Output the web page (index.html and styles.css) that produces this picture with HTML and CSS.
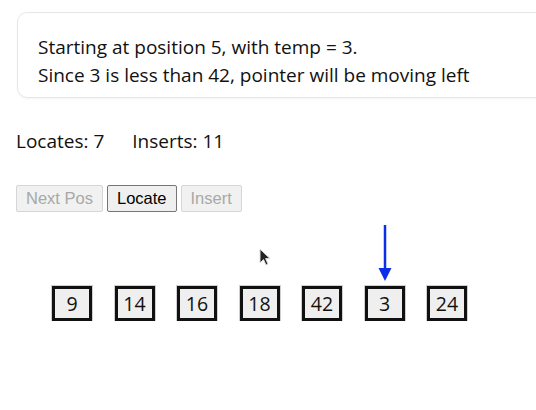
FILE: index.html
```
<!DOCTYPE html>
<html>
<head>
<meta charset="utf-8">
<link rel="stylesheet" href="styles.css">
</head>
<body>
<div class="page">
  <div class="card">
    <div>Starting at position 5, with temp = 3.</div>
    <div>Since 3 is less than 42, pointer will be moving left</div>
  </div>
  <div class="stats">
    <span>Locates: 7</span>
    <span>Inserts: 11</span>
  </div>
  <div class="buttons">
    <button class="btn" disabled>Next Pos</button>
    <button class="btn">Locate</button>
    <button class="btn" disabled>Insert</button>
  </div>
  <div class="viz">
    <div class="cell"><div class="slot"></div><div class="box">9</div></div>
    <div class="cell"><div class="slot"></div><div class="box">14</div></div>
    <div class="cell"><div class="slot"></div><div class="box">16</div></div>
    <div class="cell"><div class="slot"></div><div class="box">18</div></div>
    <div class="cell"><div class="slot"></div><div class="box">42</div></div>
    <div class="cell"><div class="slot">
      <svg class="arrow" width="14" height="57" viewBox="0 0 14 57"><line x1="7" y1="0" x2="7" y2="45" stroke="#0a2fe6" stroke-width="2.5"/><polygon points="0.5,43 13.5,43 7,56" fill="#0a2fe6"/></svg>
    </div><div class="box">3</div></div>
    <div class="cell"><div class="slot"></div><div class="box">24</div></div>
    <svg class="cursor" width="14" height="20" viewBox="0 0 14 20"><path d="M1 1 L1 15 L4.5 11.5 L7 17 L9 16 L6.6 10.6 L11 10.6 Z" fill="#222" stroke="#ddd" stroke-width="1"/></svg>
  </div>
</div>
</body>
</html>
```
FILE: styles.css
```
html, body { margin: 0; padding: 0; background: #fff; }
body { font-family: "Open Sans", "DejaVu Sans", sans-serif; color: #111; }
.page { padding: 12px 0 0 16px; overflow: hidden; width: 520px; }
.card {
  margin-left: 1px;
  width: 560px;
  border: 1px solid #e6e6e6;
  border-radius: 10px;
  padding: 20px 20px 8px 20px;
  font-size: 19px;
  line-height: 28px;
  box-shadow: 0 1px 2px rgba(0,0,0,0.04);
}
.stats { margin-top: 30px; font-size: 19px; display: flex; gap: 28px; line-height: 26px; }
.buttons { margin-top: 31px; display: flex; gap: 4px; }
.btn {
  font-family: "Liberation Sans", Arial, sans-serif;
  font-size: 16.5px;
  padding: 2px 9px;
  height: 27px;
  background: #efefef;
  border: 1px solid #767676;
  border-radius: 2px;
  color: #000;
}
.btn:disabled { color: #a8a8a8; border-color: #d6d6d6; background: #f1f1f1; }
.viz { position: relative; display: flex; gap: 22.5px; padding-left: 36px; margin-top: 12px; }
.cell { display: flex; flex-direction: column; align-items: center; width: 40px; }
.slot { height: 62px; width: 40px; display: flex; justify-content: center; align-items: flex-end; padding-bottom: 4px; box-sizing: border-box; }
.arrow { display: block; }
.box {
  box-sizing: border-box;
  width: 40px; height: 35px;
  border: 3px solid #111;
  background: #efefef;
  outline: 1px solid #cfcfcf;
  display: flex; align-items: center; justify-content: center;
  font-size: 19.5px;
}
.cursor { position: absolute; left: 243px; top: 24px; }
```
